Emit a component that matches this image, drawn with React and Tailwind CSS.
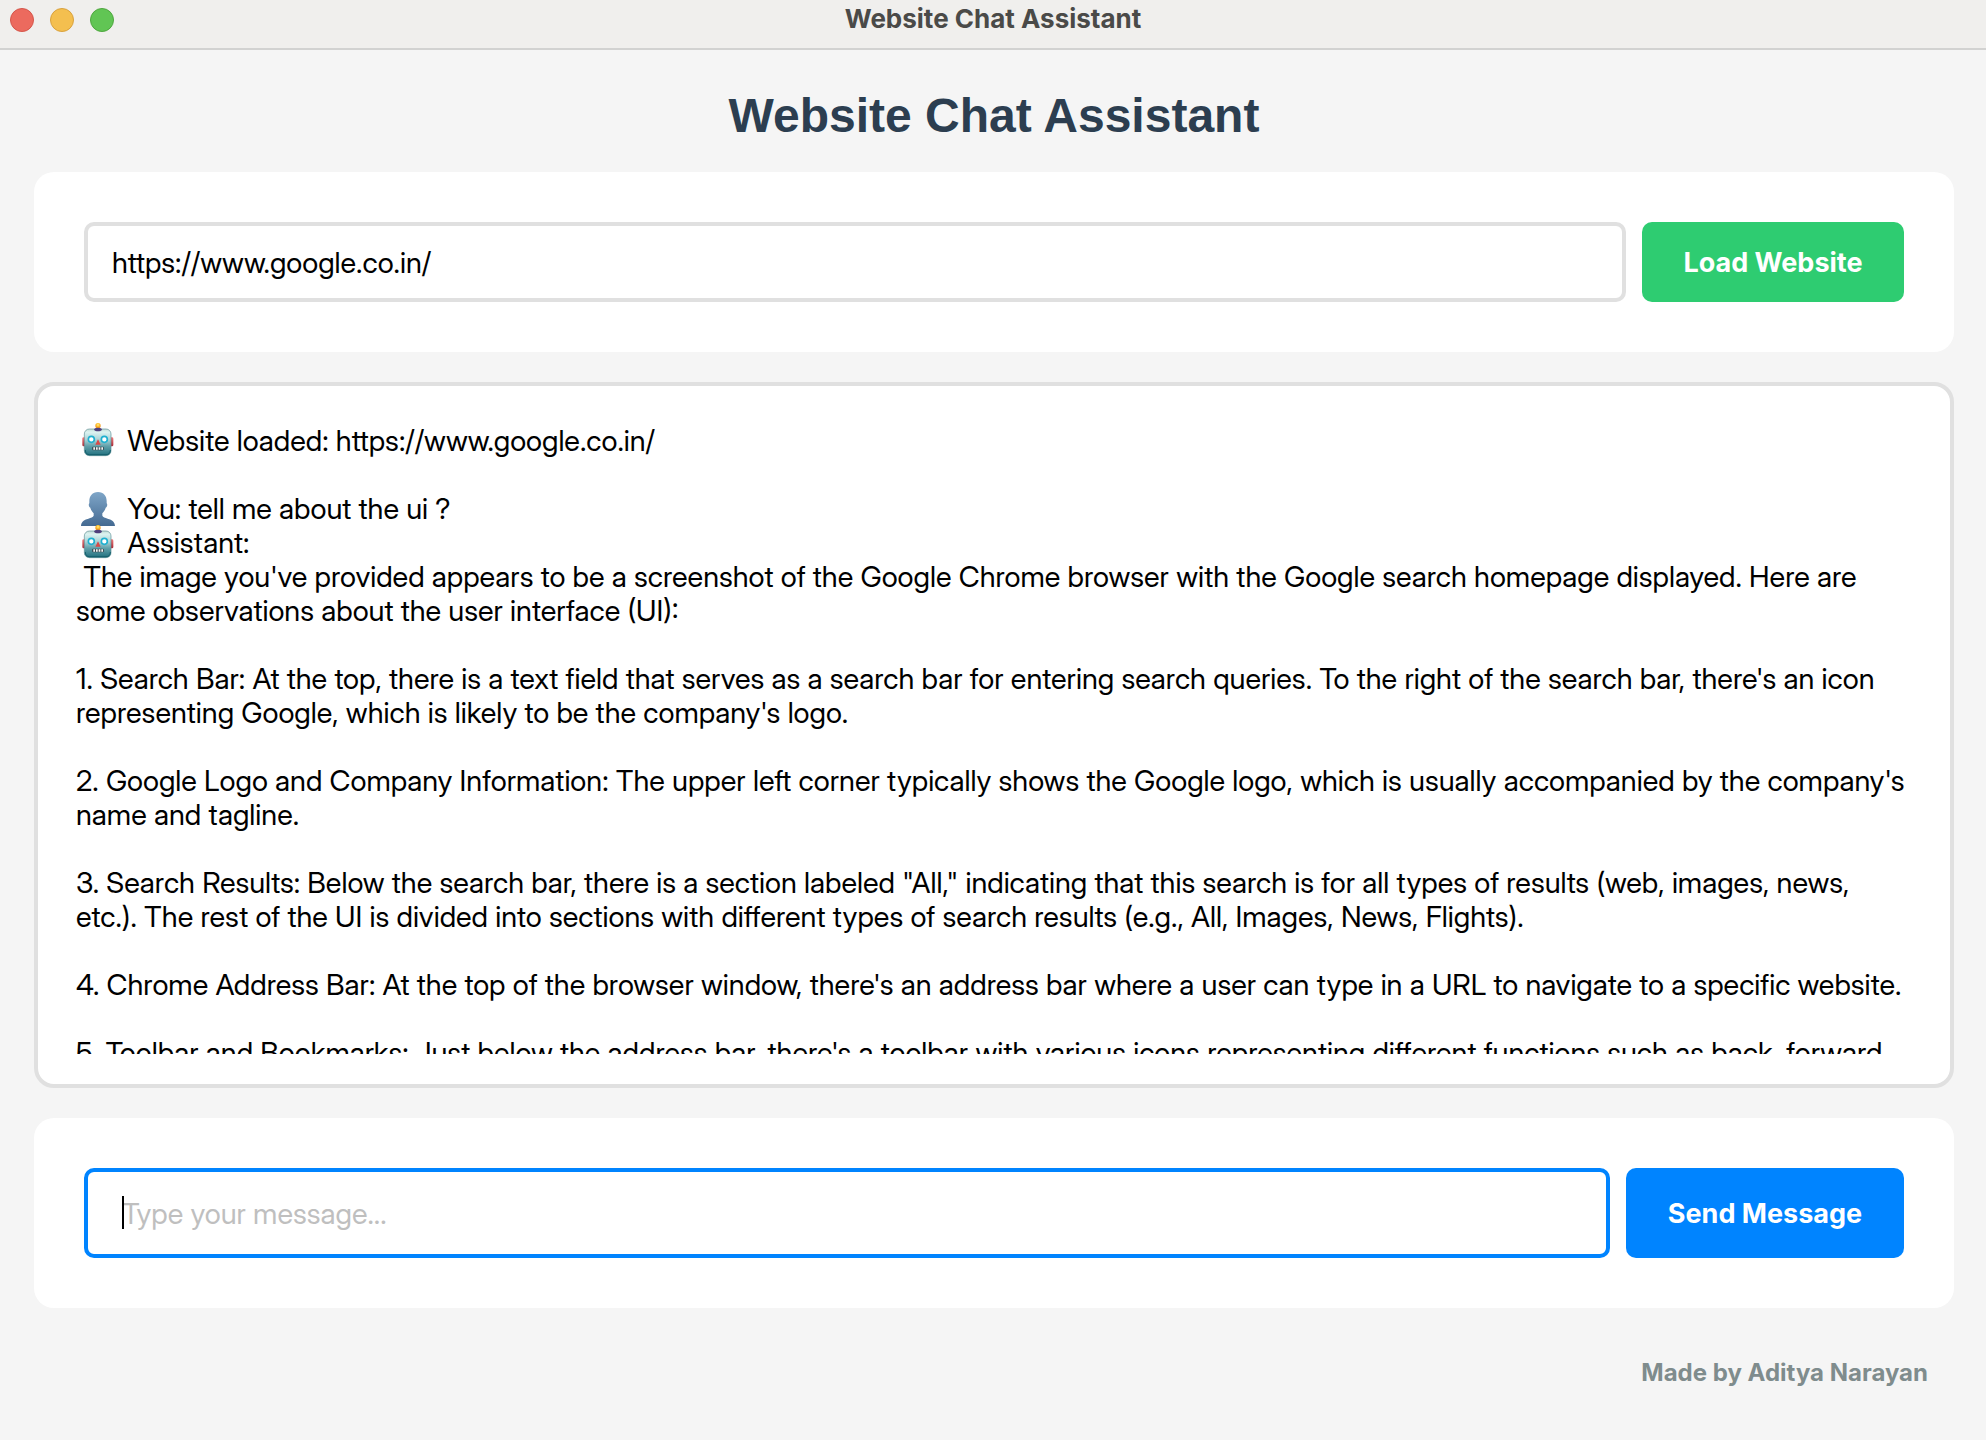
import React from "react";

function RobotIcon() {
  return (
    <svg viewBox="0 0 102 102" aria-hidden="true" className="mx-[5px] size-[34px] shrink-0 overflow-visible">
      <defs>
        <linearGradient id="robot-head" x1="0" y1="0" x2="0" y2="1">
          <stop offset="0" stopColor="#c3dcd6" />
          <stop offset="0.12" stopColor="#dcf3f1" />
          <stop offset="0.4" stopColor="#a9d3d6" />
          <stop offset="0.65" stopColor="#5f9fa9" />
          <stop offset="1" stopColor="#1f6f7d" />
        </linearGradient>
        <linearGradient id="robot-ear" x1="0" y1="0" x2="0" y2="1">
          <stop offset="0" stopColor="#f0797a" />
          <stop offset="1" stopColor="#a82a36" />
        </linearGradient>
        <radialGradient id="robot-lamp" cx="0.5" cy="0.35" r="0.6">
          <stop offset="0" stopColor="#fff08a" />
          <stop offset="0.5" stopColor="#fdc02f" />
          <stop offset="1" stopColor="#ee8a1d" />
        </radialGradient>
      </defs>
      <rect x="4" y="40" width="12" height="27" rx="4" fill="url(#robot-ear)" />
      <rect x="85" y="40" width="12" height="27" rx="4" fill="url(#robot-ear)" />
      <circle cx="51" cy="5" r="8" fill="url(#robot-lamp)" />
      <rect x="10" y="15" width="80" height="80" rx="15" fill="url(#robot-head)" stroke="#5f8f95" strokeWidth="2" />
      <path d="M39 17c0-4 5-6 12-6s12 2 12 6c-4 6-20 6-24 0z" fill="#4f3f7c" />
      <path d="M13 78c0 10 5 14 13 14h49c8 0 13-4 13-14" fill="none" stroke="#155f6c" strokeWidth="3" />
      <circle cx="31" cy="46" r="9" fill="#fff" stroke="#1fb0d0" strokeWidth="5" />
      <circle cx="70" cy="46" r="9" fill="#fff" stroke="#1fb0d0" strokeWidth="5" />
      <path d="M51 46l8 16H43z" fill="#d94a48" />
      <rect x="33" y="68" width="36" height="11" rx="4" fill="#3b4f57" />
      <path d="M37 70h5v7h-5zM45 70h5v7h-5zM53 70h5v7h-5zM61 70h5v7h-5z" fill="#f3f6f5" />
    </svg>
  );
}

function PersonIcon() {
  return (
    <svg viewBox="0 0 102 102" aria-hidden="true" className="mx-[5px] size-[34px] shrink-0 overflow-visible">
      <defs>
        <linearGradient id="person-fill" x1="0" y1="0" x2="0" y2="1">
          <stop offset="0" stopColor="#7fa6c8" />
          <stop offset="1" stopColor="#446a92" />
        </linearGradient>
      </defs>
      <path
        d="M51 0c17 0 26 12 26 27 0 3 0 6 0 7 3 1 2 12-3 13-2 8-6 13-10 17v7c2 5 8 6 16 9 14 4 21 9 22 22H0c1-13 8-18 22-22 8-3 14-4 16-9v-7c-4-4-8-9-10-17-5-1-6-12-3-13 0-1 0-4 0-7C25 12 34 0 51 0z"
        fill="url(#person-fill)"
      />
    </svg>
  );
}

const LINES = [
  { icon: "robot", text: " Website loaded: https://www.google.co.in/" },
  { text: "" },
  { icon: "person", text: " You: tell me about the ui ?" },
  { icon: "robot", text: " Assistant:" },
  { text: " The image you've provided appears to be a screenshot of the Google Chrome browser with the Google search homepage displayed. Here are" },
  { text: "some observations about the user interface (UI):" },
  { text: "" },
  { text: "1. Search Bar: At the top, there is a text field that serves as a search bar for entering search queries. To the right of the search bar, there's an icon" },
  { text: "representing Google, which is likely to be the company's logo." },
  { text: "" },
  { text: "2. Google Logo and Company Information: The upper left corner typically shows the Google logo, which is usually accompanied by the company's" },
  { text: "name and tagline." },
  { text: "" },
  { text: "3. Search Results: Below the search bar, there is a section labeled \"All,\" indicating that this search is for all types of results (web, images, news," },
  { text: "etc.). The rest of the UI is divided into sections with different types of search results (e.g., All, Images, News, Flights)." },
  { text: "" },
  { text: "4. Chrome Address Bar: At the top of the browser window, there's an address bar where a user can type in a URL to navigate to a specific website." },
  { text: "" },
  { text: "5. Toolbar and Bookmarks: Just below the address bar, there's a toolbar with various icons representing different functions such as back, forward," },
];

export default function App() {
  return (
    <div className="flex h-screen flex-col bg-[#f5f5f5] font-['Inter',sans-serif] text-black">
      <header className="grid h-[50px] shrink-0 grid-cols-[1fr_auto_1fr] items-start border-b-2 border-[#d2d2d1] bg-[#f0efed]">
        <div className="flex gap-4 pt-2 pl-2.5">
          <button type="button" aria-label="Close" className="size-6 rounded-full border border-[#d5564b] bg-[#ec6a5e]" />
          <button type="button" aria-label="Minimize" className="size-6 rounded-full border border-[#d9a23e] bg-[#f4bf4f]" />
          <button type="button" aria-label="Zoom" className="size-6 rounded-full border border-[#4fa73f] bg-[#61c554]" />
        </div>
        <div className="text-[26px] leading-[38px] font-bold text-[#4a4a48]">Website Chat Assistant</div>
      </header>

      <main className="flex min-h-0 flex-1 flex-col pr-8 pl-[34px]">
        <h1 className="flex h-[122px] shrink-0 items-center justify-center pt-2.5 font-['Liberation_Sans',Arial,sans-serif] text-[48px] leading-[56px] font-bold text-[#2c3e50]">
          Website Chat Assistant
        </h1>

        <form className="flex shrink-0 gap-4 rounded-[20px] bg-white p-[50px]" onSubmit={(e) => e.preventDefault()}>
          <input
            type="text"
            aria-label="Website address"
            defaultValue="https://www.google.co.in/"
            className="h-20 min-w-0 flex-1 rounded-[10px] border-4 border-[#e0e0e0] bg-white px-6 font-['Inter_Display','Inter',sans-serif] text-[29px] outline-none"
          />
          <button type="submit" className="h-20 w-[262px] rounded-[10px] bg-[#2ecc71] pt-0.5 text-[27px] font-bold text-white">
            Load Website
          </button>
        </form>

        <section aria-label="Conversation" className="mt-[30px] flex min-h-0 flex-1 flex-col rounded-[20px] border-4 border-[#e0e0e0] bg-white py-[30px] pl-[38px]">
          <div className="min-h-0 flex-1 overflow-hidden pt-2 font-['Inter_Display','Inter',sans-serif] text-[29px] leading-[34px]">
            {LINES.map((line, i) => (
              <p key={i} className="flex h-[34px] whitespace-pre">
                {line.icon === "robot" && <RobotIcon />}
                {line.icon === "person" && <PersonIcon />}
                <span>{line.text}</span>
              </p>
            ))}
          </div>
        </section>

        <form className="mt-[30px] flex shrink-0 gap-4 rounded-[20px] bg-white p-[50px]" onSubmit={(e) => e.preventDefault()}>
          <div className="relative flex min-w-0 flex-1">
            <input
              type="text"
              aria-label="Message"
              placeholder="Type your message..."
              className="h-[90px] min-w-0 flex-1 rounded-[10px] border-4 border-[#0084ff] bg-white px-[34px] font-['Inter_Display','Inter',sans-serif] text-[29px] outline-none placeholder:text-[#bfbfbf]"
            />
            <span className="pointer-events-none absolute top-7 left-[38px] h-[33px] w-0.5 bg-black" />
          </div>
          <button type="submit" className="h-[90px] w-[278px] rounded-[10px] bg-[#0084ff] pt-0.5 text-[27px] font-bold text-white">
            Send Message
          </button>
        </form>

        <footer className="flex h-[132px] shrink-0 items-center justify-end pr-[26px] pb-0.5 text-[24px] font-bold text-[#7f8c8d]">
          Made by Aditya Narayan
        </footer>
      </main>
    </div>
  );
}
